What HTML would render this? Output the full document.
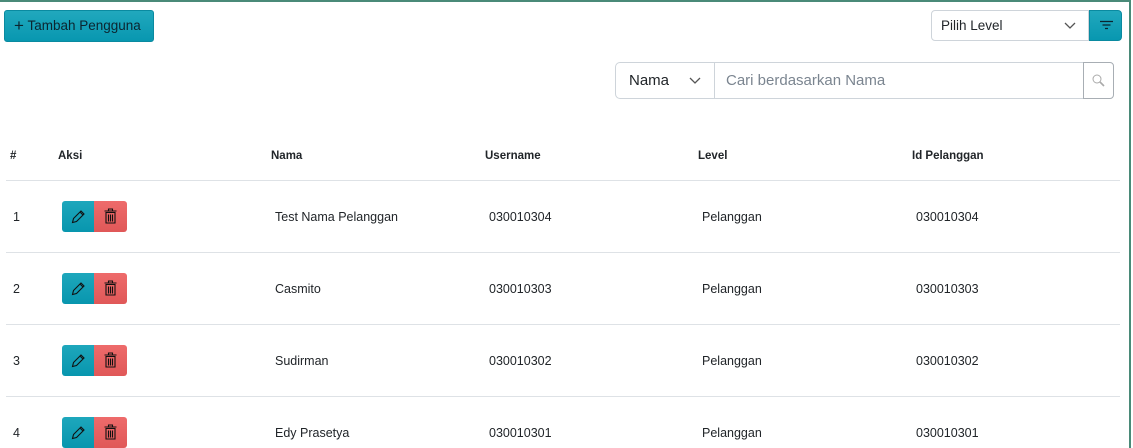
<!DOCTYPE html>
<html><head><style>
body{margin:0;width:1133px;height:448px;overflow:hidden;background:#fff;font-family:"Liberation Sans",sans-serif;position:relative;color:#212529}
.frame{position:absolute;left:0;top:0;width:1131px;height:448px;border-top:2px solid #4a8a78;border-right:2px solid #4a8a78;box-sizing:border-box}
.abs{position:absolute}
.btn{background:linear-gradient(#21a8bd,#0897b0);border:1px solid #0a8aa0;border-radius:3px;color:#0b2530;font-size:13.5px}
.th{position:absolute;font-size:11.5px;font-weight:bold;top:150px}
.td{position:absolute;font-size:12.5px}
.line{position:absolute;left:6px;width:1114px;height:1px;background:#dee2e6}
</style></head><body>
<div class="frame"></div>
<div class="abs btn" style="left:4px;top:10px;width:148px;height:30px;line-height:30px;text-indent:9px"><span style="font-size:17px;vertical-align:-1px">+</span> Tambah Pengguna</div>
<div class="abs" style="left:931px;top:10px;width:158px;height:31px;border:1px solid #ced4da;border-radius:4px 0 0 4px;box-sizing:border-box;font-size:13.5px;line-height:30px;padding-left:9px">Pilih Level
<svg class="abs" style="left:132px;top:11px" width="12" height="8"><path d="M1 1l5 5 5-5" stroke="#555" fill="none" stroke-width="1.3"/></svg></div>
<div class="abs btn" style="left:1089px;top:10px;width:33px;height:31px;border-radius:0 4px 4px 0;box-sizing:border-box">
<svg class="abs" style="left:10px;top:9px" width="13" height="11"><path d="M0 1.5h13M2.5 5h8M5 8.5h3" stroke="#0b2530" stroke-width="1.3"/></svg></div>
<div class="abs" style="left:615px;top:62px;width:100px;height:37px;border:1px solid #ced4da;border-radius:5px 0 0 5px;box-sizing:border-box;font-size:15px;line-height:36px;padding-left:13px">Nama
<svg class="abs" style="left:73px;top:14px" width="12" height="8"><path d="M1 1l5 5 5-5" stroke="#555" fill="none" stroke-width="1.3"/></svg></div>
<div class="abs" style="left:714px;top:62px;width:370px;height:37px;border:1px solid #ced4da;border-left:none;box-sizing:border-box;font-size:15px;line-height:36px;padding-left:12px;color:#7b8590">Cari berdasarkan Nama</div>
<div class="abs" style="left:1083px;top:62px;width:31px;height:37px;border:1px solid #a8aeb4;border-radius:0 4px 4px 0;box-sizing:border-box">
<svg class="abs" style="left:8px;top:11px" width="14" height="14"><circle cx="5" cy="5" r="4" stroke="#aaa" fill="none"/><path d="M8 8l4 4" stroke="#aaa" stroke-width="1.6"/></svg></div>
<div class="th" style="left:10px">#</div><div class="th" style="left:58px">Aksi</div><div class="th" style="left:271px">Nama</div><div class="th" style="left:485px">Username</div><div class="th" style="left:698px">Level</div><div class="th" style="left:912px">Id Pelanggan</div>
<div class="line" style="top:180px"></div>
<div id="rows"></div>
<script>
var d=[["1","Test Nama Pelanggan","030010304"],["2","Casmito","030010303"],["3","Sudirman","030010302"],["4","Edy Prasetya","030010301"]];
var h="";d.forEach(function(r,i){var y=210+72*i;
h+='<div class="td" style="left:13px;top:'+y+'px">'+r[0]+'</div>'+
'<div class="abs" style="left:62px;top:'+(y-9)+'px;width:32px;height:31px;background:linear-gradient(#1ea7bc,#0896ae);border-radius:3px 0 0 3px"><svg class="abs" style="left:9px;top:8px" width="15" height="15"><path d="M1.5 13.5l1-4 7.5-7.5 3 3-7.5 7.5z M9 3l3 3" stroke="#111" fill="none" stroke-width="1.1"/></svg></div>'+
'<div class="abs" style="left:94px;top:'+(y-9)+'px;width:33px;height:31px;background:linear-gradient(#ee6b6b,#e05858);border-radius:0 3px 3px 0"><svg class="abs" style="left:10px;top:7px" width="13" height="16"><path d="M0.5 3h12M4.5 3V1h4v2M2 4.5h9v10.5H2z M4.5 6.5v7M6.5 6.5v7M8.5 6.5v7" stroke="#111" fill="none" stroke-width="1.1"/></svg></div>'+
'<div class="td" style="left:275px;top:'+y+'px">'+r[1]+'</div><div class="td" style="left:489px;top:'+y+'px">'+r[2]+'</div><div class="td" style="left:702px;top:'+y+'px">Pelanggan</div><div class="td" style="left:916px;top:'+y+'px">'+r[2]+'</div>';
if(i<3)h+='<div class="line" style="top:'+(y+42)+'px"></div>';});
document.getElementById("rows").innerHTML=h;
</script>
</body></html>
